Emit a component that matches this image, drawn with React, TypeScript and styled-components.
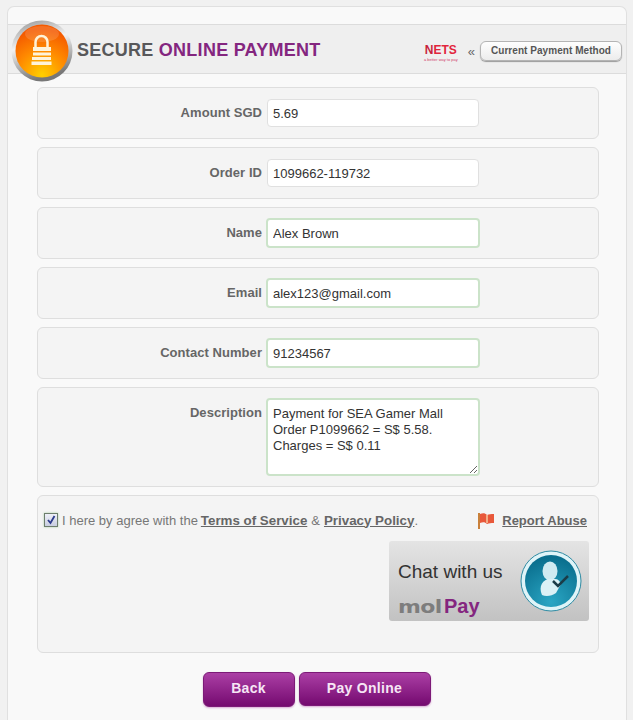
import React from 'react';
import styled, { createGlobalStyle } from 'styled-components';

const Global = createGlobalStyle`
  html, body {
    margin: 0;
    height: 720px;
    overflow: hidden;
    background: #f1f1f1;
    font-family: "Liberation Sans", Arial, sans-serif;
  }
`;

const Panel = styled.div`
  box-sizing: border-box;
  width: 620px;
  height: 714px;
  margin: 6px 0 0 7px;
  background: #f9f9f9;
  border: 1px solid #e0e0e0;
  border-bottom: 0;
  border-radius: 7px 7px 0 0;
`;

const Header = styled.div`
  box-sizing: border-box;
  height: 50px;
  margin-top: 17px;
  padding: 0 4px 0 3px;
  display: flex;
  align-items: center;
  background: #efefef;
  border-top: 1px solid #dcdcdc;
  border-bottom: 1px solid #dcdcdc;
`;

const Badge = styled.svg`
  width: 62px;
  height: 62px;
  flex: none;
  margin: 4px 4px 0 0;
`;

const Title = styled.h1`
  margin: 2px 0 0;
  font-size: 18px;
  font-weight: 700;
  color: #58585a;
  letter-spacing: 0.26px;
  flex: 1;
`;

const Accent = styled.span`
  color: #84267f;
`;

const Nets = styled.div`
  display: flex;
  flex-direction: column;
  align-items: center;
  margin-right: 10px;
  margin-top: 7px;
`;

const NetsMark = styled.span`
  font-size: 12px;
  line-height: 14px;
  font-weight: 700;
  color: #e2253c;
`;

const NetsFirst = styled.span`
  color: #c81f3d;
`;

const NetsTag = styled.span`
  font-size: 4px;
  line-height: 5px;
  color: #d0406a;
  white-space: nowrap;
`;

const Chevrons = styled.span`
  font-size: 13px;
  color: #666;
  margin-right: 5px;
  margin-top: 4px;
`;

const MethodButton = styled.button`
  box-sizing: border-box;
  width: 142px;
  height: 20px;
  padding: 0;
  margin-top: 3px;
  font-family: inherit;
  font-size: 10px;
  font-weight: 700;
  letter-spacing: 0.05px;
  color: #555;
  background: linear-gradient(#fefefe, #ececec);
  border: 1px solid #b4b4b4;
  border-radius: 6px;
  box-shadow: 0 1px 1px #999;
`;

const Form = styled.form`
  width: 562px;
  margin: 13px 0 0 29px;
  display: flex;
  flex-direction: column;
  gap: 8px;
`;

const Row = styled.div<{ $h?: number }>`
  box-sizing: border-box;
  height: ${(p) => p.$h ?? 52}px;
  padding-top: 11px;
  display: flex;
  align-items: flex-start;
  gap: 5px;
  background: #f4f4f4;
  border: 1px solid #dedede;
  border-radius: 6px;
`;

const Label = styled.label`
  width: 224px;
  text-align: right;
  font-size: 13px;
  font-weight: 700;
  line-height: 28px;
  letter-spacing: 0.05px;
  color: #666;
  white-space: nowrap;
`;

const Field = styled.input<{ $edit?: boolean }>`
  box-sizing: border-box;
  width: ${(p) => (p.$edit ? 214 : 212)}px;
  height: ${(p) => (p.$edit ? 30 : 28)}px;
  margin: ${(p) => (p.$edit ? '-1px 0 0 -1px' : '0')};
  padding: 0 5px;
  font-family: inherit;
  font-size: 13px;
  color: #333;
  background: #fff;
  outline: none;
  border: ${(p) => (p.$edit ? '2px solid #cbe3c9' : '1px solid #e0e0e0')};
  border-radius: 4px;
`;

const Area = styled.textarea`
  box-sizing: border-box;
  width: 214px;
  height: 78px;
  margin: -1px 0 0 -1px;
  padding: 6px 5px;
  font-family: inherit;
  font-size: 13px;
  line-height: 16px;
  color: #333;
  background: #fff;
  outline: none;
  border: 2px solid #cbe3c9;
  border-radius: 4px;
`;

const AgreeBox = styled.div`
  box-sizing: border-box;
  height: 158px;
  padding: 14px 11px 0 6px;
  background: #f4f4f4;
  border: 1px solid #dedede;
  border-radius: 6px;
`;

const AgreeLine = styled.div`
  display: flex;
  align-items: center;
  height: 20px;
  font-size: 13px;
  color: #777;
`;

const Check = styled.span`
  box-sizing: border-box;
  width: 14px;
  height: 14px;
  margin-right: 4px;
  display: inline-flex;
  align-items: center;
  justify-content: center;
  background: linear-gradient(#eef0f8, #c8cde0);
  border: 1px solid #6d7d6d;
  box-shadow: 0 0 2px #a8cfa6;
`;

const Strong = styled.a<{ $end?: boolean }>`
  margin: ${(p) => (p.$end ? '0 0 0 4px' : '0 4px 0 3px')};
  font-size: 13.33px;
  font-weight: 700;
  color: #666;
  text-decoration: underline;
`;

const Spacer = styled.span`
  flex: 1;
`;

const Flag = styled.svg`
  width: 18px;
  height: 17px;
  margin-right: 7px;
`;

const Abuse = styled.a`
  font-size: 13px;
  font-weight: 700;
  color: #666;
  text-decoration: underline;
`;

const ChatWrap = styled.div`
  display: flex;
  justify-content: flex-end;
  margin: 11px -2px 0 0;
`;

const Chat = styled.div`
  box-sizing: border-box;
  width: 200px;
  height: 80px;
  padding: 0 7px 0 9px;
  display: flex;
  align-items: center;
  justify-content: space-between;
  background: linear-gradient(#e4e4e4, #c2c2c2);
  border-radius: 3px;
`;

const ChatText = styled.div`
  display: flex;
  flex-direction: column;
  align-self: flex-start;
  padding-top: 20px;
`;

const ChatTitle = styled.span`
  font-size: 19px;
  line-height: 22px;
  color: #333;
`;

const MolPay = styled.span`
  margin-top: 13px;
  font-size: 20px;
  line-height: 20px;
  font-weight: 700;
  color: #84267f;
`;

const Mol = styled.span`
  display: inline-block;
  width: 46px;
  font-family: "DejaVu Sans", sans-serif;
  font-size: 18px;
  letter-spacing: -0.5px;
  color: #7d7d7d;
  transform: scaleX(1.22);
  transform-origin: left center;
`;

const Actions = styled.div`
  margin-top: 19px;
  display: flex;
  justify-content: center;
  align-items: flex-start;
  gap: 4px;
  padding-right: 1px;
`;

const Action = styled.button<{ $w: number; $h: number }>`
  box-sizing: border-box;
  width: ${(p) => p.$w}px;
  height: ${(p) => p.$h}px;
  padding: 0 0 ${(p) => p.$h - 32}px;
  font-family: inherit;
  font-size: 14px;
  font-weight: 700;
  letter-spacing: 0.3px;
  color: #f6e6f5;
  background: linear-gradient(#ab3fa5, #750a70);
  border: 1px solid #7c1a77;
  border-radius: 6px;
  box-shadow: 0 1px 2px #d9a9d6;
`;

function LockBadge(): React.JSX.Element {
  return (
    <Badge viewBox="0 0 62 62">
      <defs>
        <linearGradient id="ring" x1="0" y1="0" x2="0.3" y2="1">
          <stop offset="0" stopColor="#8f8f8f" />
          <stop offset="0.45" stopColor="#f2f2f2" />
          <stop offset="1" stopColor="#777" />
        </linearGradient>
        <radialGradient id="ball" cx="0.5" cy="0.95" r="0.85">
          <stop offset="0" stopColor="#ffd000" />
          <stop offset="0.55" stopColor="#ff8a00" />
          <stop offset="1" stopColor="#f45a00" />
        </radialGradient>
      </defs>
      <circle cx="31" cy="31" r="30.500" fill="url(#ring)" />
      <circle cx="31" cy="31" r="26.500" fill="url(#ball)" />
      <ellipse cx="31" cy="14" rx="17" ry="8" fill="#fff" opacity="0.14" />
      <path d="M24.500 27v-5a6 6 0 0 1 12 0v5" fill="none" stroke="#fff3d8" strokeWidth="2.500" />
      <path
        d="M22 27h18v4h-18zM22 32.500h18v3h-18zM21 37h19v3h-19zM20.500 41.500h20v3.500h-20z"
        fill="#fff3d8"
      />
    </Badge>
  );
}

function ChatAvatar(): React.JSX.Element {
  return (
    <svg width="62" height="62" viewBox="0 0 62 62">
      <defs>
        <radialGradient id="blue" cx="0.5" cy="0.9" r="0.85">
          <stop offset="0" stopColor="#2aa6c4" />
          <stop offset="1" stopColor="#0a6f8e" />
        </radialGradient>
      </defs>
      <circle cx="31" cy="31" r="30" fill="#dff4f8" stroke="#2f8ba3" />
      <circle cx="31" cy="31" r="26" fill="url(#blue)" />
      <ellipse cx="30" cy="21" rx="7.500" ry="9.500" fill="#cfeaf1" />
      <path d="M22 45c-4-9 1-16 8-16h5c3 0 5 2 6 5l-5 9c-4 3-10 4-14 2z" fill="#dbf1f6" />
      <path d="M33 31l5 5 10-10" fill="none" stroke="#1b3c48" strokeWidth="2.500" />
    </svg>
  );
}

export default function App(): React.JSX.Element {
  return (
    <>
      <Global />
      <Panel>
        <Header>
          <LockBadge />
          <Title>
            SECURE <Accent>ONLINE PAYMENT</Accent>
          </Title>
          <Nets>
            <NetsMark>
              <NetsFirst>N</NetsFirst>ETS
            </NetsMark>
            <NetsTag>a better way to pay</NetsTag>
          </Nets>
          <Chevrons>«</Chevrons>
          <MethodButton type="button">Current Payment Method</MethodButton>
        </Header>
        <Form>
          <Row>
            <Label>Amount SGD</Label>
            <Field readOnly value="5.69" />
          </Row>
          <Row>
            <Label>Order ID</Label>
            <Field readOnly value="1099662-119732" />
          </Row>
          <Row>
            <Label>Name</Label>
            <Field $edit readOnly value="Alex Brown" />
          </Row>
          <Row>
            <Label>Email</Label>
            <Field $edit readOnly value="alex123@gmail.com" />
          </Row>
          <Row>
            <Label>Contact Number</Label>
            <Field $edit readOnly value="91234567" />
          </Row>
          <Row $h={100}>
            <Label>Description</Label>
            <Area
              readOnly
              value={'Payment for SEA Gamer Mall\nOrder P1099662 = S$ 5.58.\nCharges = S$ 0.11'}
            />
          </Row>
          <AgreeBox>
            <AgreeLine>
              <Check>
                <svg width="10" height="10" viewBox="0 0 10 10">
                  <path d="M2 5l2.500 3L8.500 1" fill="none" stroke="#2b3a8c" strokeWidth="1.800" />
                </svg>
              </Check>
              I here by agree with the<Strong>Terms of Service</Strong>&amp;
              <Strong $end>Privacy Policy</Strong>.
              <Spacer />
              <Flag viewBox="0 0 18 17">
                <path d="M2 1v16" stroke="#c9803a" strokeWidth="2" />
                <path d="M3 2c3-1 5-1 7 1 2-1 4-1 7-1v9c-3 0-5 0-7 1-2-2-4-2-7-1z" fill="#e8583a" />
                <path d="M10 3v8" stroke="#f6c9a0" strokeWidth="1.500" />
              </Flag>
              <Abuse>Report Abuse</Abuse>
            </AgreeLine>
            <ChatWrap>
              <Chat>
                <ChatText>
                  <ChatTitle>Chat with us</ChatTitle>
                  <MolPay>
                    <Mol>mol</Mol>Pay
                  </MolPay>
                </ChatText>
                <ChatAvatar />
              </Chat>
            </ChatWrap>
          </AgreeBox>
        </Form>
        <Actions>
          <Action type="button" $w={92} $h={35}>Back</Action>
          <Action type="button" $w={132} $h={34}>Pay Online</Action>
        </Actions>
      </Panel>
    </>
  );
}
